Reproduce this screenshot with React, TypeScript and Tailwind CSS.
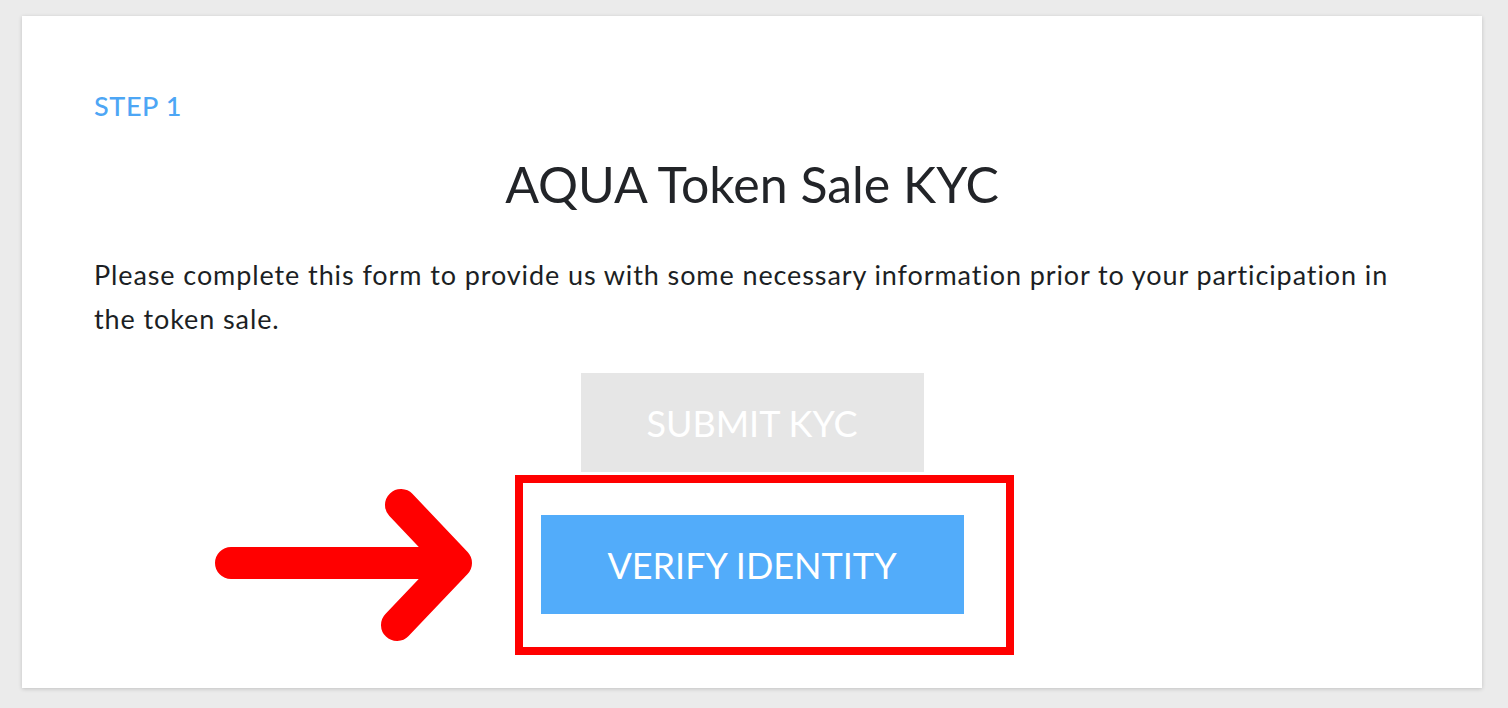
import React from 'react'

export default function App() {
    return (
        <div className="min-h-screen bg-[#ebebeb] pt-[16px] pl-[22px] pr-[26px] pb-[20px] font-['Lato','Noto_Sans',sans-serif]">
            <div className="w-[1460px] h-[672px] bg-white shadow-[0_1px_4px_rgba(0,0,0,0.18)] px-[72px] pt-[75px]">
                <div className="text-[27px] leading-[30px] font-medium text-[#4da6f5] tracking-[0.6px]">STEP 1</div>

                <h1 className="mt-[34px] text-center text-[50px] leading-[58px] text-[#222428]">AQUA Token Sale KYC</h1>

                <p className="mt-[40px] text-[27px] leading-[44px] tracking-[0.9px] text-[#1c1f24]">
                    Please complete this form to provide us with some necessary information prior to your participation in the token sale.
                </p>

                <div className="mt-[32px] flex flex-col items-center">
                    <button className="w-[343px] h-[99px] bg-[#e6e6e6] text-white text-[36px]">SUBMIT KYC</button>

                    <div className="relative mt-[43px]">
                        <button className="w-[423px] h-[99px] bg-[#52acfa] text-white text-[36px]">VERIFY IDENTITY</button>

                        {/* annotation box */}
                        <div className="absolute left-[-26px] top-[-40px] w-[499px] h-[180px] border-[8px] border-[#ff0000] pointer-events-none" />

                        {/* annotation arrow */}
                        <svg className="absolute left-[-340px] top-[-40px]" width="300" height="180" viewBox="0 0 300 180">
                            <path d="M30 88 H255 M200 30 L255 88 L196 150" fill="none" stroke="#ff0000" strokeWidth="32" strokeLinecap="round" strokeLinejoin="round" />
                        </svg>
                    </div>
                </div>
            </div>
        </div>
    )
}
